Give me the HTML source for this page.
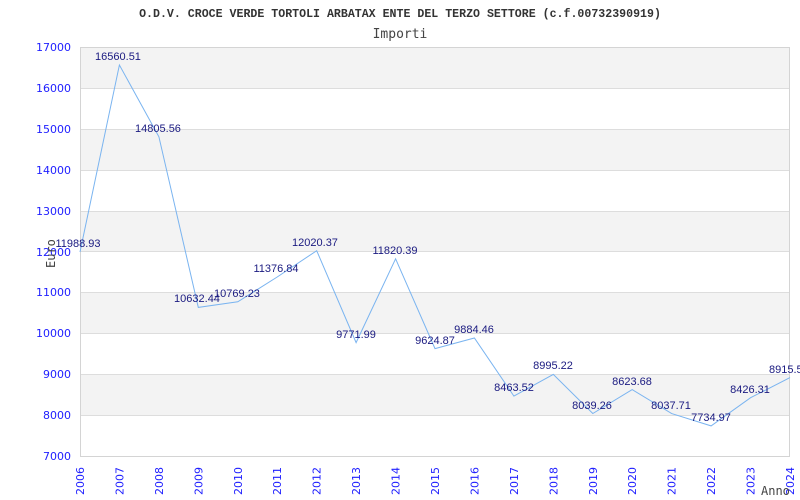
<!DOCTYPE html>
<html><head><meta charset="utf-8"><style>
html,body{margin:0;padding:0;background:#fff;width:800px;height:500px;overflow:hidden}
svg{display:block}
.v{font-family:"Liberation Sans",sans-serif;font-size:11px;fill:#1a1a80;text-anchor:middle}
.ax{font-family:"DejaVu Sans","Liberation Sans",sans-serif;font-size:11px;fill:#2020ff}
</style></head><body>
<svg width="800" height="500" xmlns="http://www.w3.org/2000/svg">
<text x="400" y="17" text-anchor="middle" font-family="Liberation Mono,monospace" font-weight="bold" font-size="11.6" fill="#333">O.D.V. CROCE VERDE TORTOLI ARBATAX ENTE DEL TERZO SETTORE (c.f.00732390919)</text>
<text x="400" y="38" text-anchor="middle" font-family="DejaVu Sans Mono,monospace" font-size="13" fill="#444">Importi</text>
<rect x="80" y="47" width="710" height="409" fill="#fff"/>
<rect x="80" y="47" width="710" height="41" fill="#f3f3f3"/>
<rect x="80" y="129" width="710" height="41" fill="#f3f3f3"/>
<rect x="80" y="211" width="710" height="41" fill="#f3f3f3"/>
<rect x="80" y="292" width="710" height="41" fill="#f3f3f3"/>
<rect x="80" y="374" width="710" height="41" fill="#f3f3f3"/>
<g stroke="#ddd" stroke-width="1">
<line x1="80" y1="88.5" x2="790" y2="88.5"/><line x1="80" y1="129.5" x2="790" y2="129.5"/>
<line x1="80" y1="170.5" x2="790" y2="170.5"/><line x1="80" y1="211.5" x2="790" y2="211.5"/>
<line x1="80" y1="251.5" x2="790" y2="251.5"/><line x1="80" y1="292.5" x2="790" y2="292.5"/>
<line x1="80" y1="333.5" x2="790" y2="333.5"/><line x1="80" y1="374.5" x2="790" y2="374.5"/>
<line x1="80" y1="415.5" x2="790" y2="415.5"/>
</g>
<rect x="80.5" y="47.5" width="709" height="409" fill="none" stroke="#d4d4d4"/>
<g class="ax" text-anchor="end">
<text x="71" y="51">17000</text><text x="71" y="92">16000</text><text x="71" y="133">15000</text>
<text x="71" y="174">14000</text><text x="71" y="215">13000</text><text x="71" y="256">12000</text>
<text x="71" y="296">11000</text><text x="71" y="337">10000</text><text x="71" y="378">9000</text>
<text x="71" y="419">8000</text><text x="71" y="460">7000</text>
</g>
<g class="ax">
<text transform="translate(84,495) rotate(-90)">2006</text>
<text transform="translate(123.5,495) rotate(-90)">2007</text>
<text transform="translate(162.9,495) rotate(-90)">2008</text>
<text transform="translate(202.3,495) rotate(-90)">2009</text>
<text transform="translate(241.8,495) rotate(-90)">2010</text>
<text transform="translate(281.2,495) rotate(-90)">2011</text>
<text transform="translate(320.7,495) rotate(-90)">2012</text>
<text transform="translate(360.1,495) rotate(-90)">2013</text>
<text transform="translate(399.6,495) rotate(-90)">2014</text>
<text transform="translate(439,495) rotate(-90)">2015</text>
<text transform="translate(478.4,495) rotate(-90)">2016</text>
<text transform="translate(517.9,495) rotate(-90)">2017</text>
<text transform="translate(557.3,495) rotate(-90)">2018</text>
<text transform="translate(596.8,495) rotate(-90)">2019</text>
<text transform="translate(636.2,495) rotate(-90)">2020</text>
<text transform="translate(675.7,495) rotate(-90)">2021</text>
<text transform="translate(715.1,495) rotate(-90)">2022</text>
<text transform="translate(754.6,495) rotate(-90)">2023</text>
<text transform="translate(794,495) rotate(-90)">2024</text>
</g>
<text x="761" y="495" font-family="DejaVu Sans Mono,monospace" font-size="12" fill="#444">Anno</text>
<text transform="translate(55,268) rotate(-90)" font-family="DejaVu Sans Mono,monospace" font-size="12" fill="#444">Euro</text>
<polyline fill="none" stroke="#7ab4f0" stroke-width="1" points="80,252 119.4,65 158.9,136.8 198.3,307.4 237.8,301.8 277.2,277 316.7,250.7 356.1,342.6 395.6,258.8 435,348.6 474.4,338 513.9,396.1 553.3,374.4 592.8,413.5 632.2,389.6 671.7,413.6 711.1,425.9 750.6,397.7 790,377.6"/>
<g class="v">
<text x="78" y="247">11988.93</text>
<text x="118" y="60">16560.51</text>
<text x="158" y="132">14805.56</text>
<text x="197" y="302">10632.44</text>
<text x="237" y="297">10769.23</text>
<text x="276" y="272">11376.84</text>
<text x="315" y="246">12020.37</text>
<text x="356" y="338">9771.99</text>
<text x="395" y="254">11820.39</text>
<text x="435" y="344">9624.87</text>
<text x="474" y="333">9884.46</text>
<text x="514" y="391">8463.52</text>
<text x="553" y="369">8995.22</text>
<text x="592" y="409">8039.26</text>
<text x="632" y="385">8623.68</text>
<text x="671" y="409">8037.71</text>
<text x="711" y="421">7734.97</text>
<text x="750" y="393">8426.31</text>
<text x="769" y="373" text-anchor="start">8915.5</text>
</g>
</svg>
</body></html>
